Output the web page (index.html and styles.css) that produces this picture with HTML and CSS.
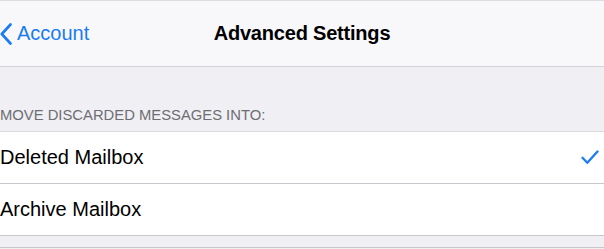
FILE: index.html
```html
<!DOCTYPE html>
<html lang="en">
<head>
    <meta charset="UTF-8">
    <meta name="viewport" content="width=device-width, initial-scale=1.0">
    <title>Advanced Settings</title>
    <link rel="stylesheet" href="styles.css">
</head>
<body>

    <div class="navbar">
        <a class="back" href="#">
            <svg class="chevron" width="12" height="22" viewBox="0 0 12 22">
                <path d="M10.5 1.5 L1.8 11 L10.5 20.5" fill="none" stroke="#1a7cf2" stroke-width="2.6" stroke-linecap="round" stroke-linejoin="round"/>
            </svg>
            <span>Account</span>
        </a>
        <h1>Advanced Settings</h1>
    </div>

    <div class="group">
        <div class="group-header">MOVE DISCARDED MESSAGES INTO:</div>
        <div class="list">
            <div class="row">
                <span>Deleted Mailbox</span>
                <svg class="check" width="18" height="15" viewBox="0 0 18 15">
                    <path d="M1.5 7.8 L6.3 12.8 L16.5 1.5" fill="none" stroke="#1a7cf2" stroke-width="2.3" stroke-linecap="round" stroke-linejoin="round"/>
                </svg>
            </div>
            <div class="row">
                <span>Archive Mailbox</span>
            </div>
        </div>
        <div class="group-footer"></div>
    </div>

</body>
</html>
```

FILE: styles.css
```css
/* Base */
body {
    margin: 0;
    padding: 0;
    width: 604px;
    height: 249px;
    overflow: hidden;
    background-color: #efeff4;
    font-family: "Liberation Sans", Arial, sans-serif;
    color: #000000;
}

/* Navigation bar */
.navbar {
    position: relative;
    height: 65px;
    background-color: #f8f8fa;
    border-top: 1px solid #dcdce1;
    border-bottom: 1px solid #d3d3d8;
    display: flex;
    align-items: center;
    justify-content: center;
}

.back {
    position: absolute;
    left: 0;
    top: 21px;
    display: flex;
    align-items: center;
    gap: 5px;
    color: #1a7cf2;
    text-decoration: none;
    font-size: 20px;
}

.navbar h1 {
    margin: 0;
    font-size: 20px;
    font-weight: bold;
    letter-spacing: -0.2px;
}

/* Grouped list */
.group-header {
    height: 64px;
    box-sizing: border-box;
    padding: 0 0 8px 0;
    display: flex;
    align-items: flex-end;
    font-size: 14.8px;
    color: #6d6d72;
}

.list {
    background-color: #ffffff;
    border-top: 1px solid #d8d8dd;
}

.row {
    height: 51px;
    display: flex;
    align-items: center;
    justify-content: space-between;
    padding-right: 5px;
    border-bottom: 1px solid #c8c7cc;
    font-size: 20px;
}

.check {
    margin-top: -1px;
}

.group-footer {
    height: 11px;
    border-bottom: 1px solid #c8c7cc;
}
```
